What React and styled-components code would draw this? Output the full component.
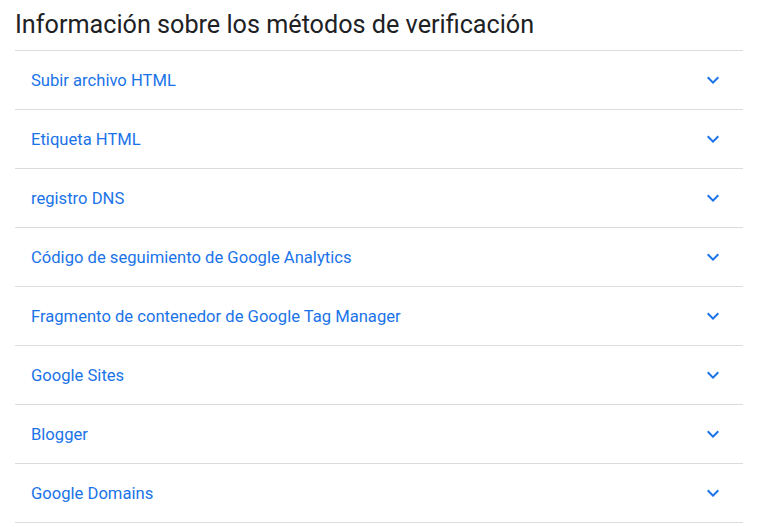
import React from 'react'
import styled, { createGlobalStyle } from 'styled-components'

const GlobalStyle = createGlobalStyle`
  body {
    margin: 0;
    background: #fff;
    font-family: Roboto, 'Noto Sans', Arial, sans-serif;
  }
`

const methods = [
  'Subir archivo HTML',
  'Etiqueta HTML',
  'registro DNS',
  'Código de seguimiento de Google Analytics',
  'Fragmento de contenedor de Google Tag Manager',
  'Google Sites',
  'Blogger',
  'Google Domains',
]

const ExpandIcon = () => (
  <svg width='24' height='24' viewBox='0 0 24 24' fill='#1a73e8'>
    <path d='M16.59 8.59L12 13.17 7.41 8.59 6 10l6 6 6-6z' />
  </svg>
)

const App = () => {
  return (
    <Wrapper>
      <GlobalStyle />
      <Title>Información sobre los métodos de verificación</Title>
      <List>
        {methods.map((name) => (
          <Row key={name}>
            <Label>{name}</Label>
            <ExpandIcon />
          </Row>
        ))}
      </List>
    </Wrapper>
  )
}

const Wrapper = styled.div`
  width: 728px;
  padding-left: 15px;
`

const Title = styled.h2`
  margin: 0;
  height: 50px;
  padding-top: 9px;
  box-sizing: border-box;
  font-size: 25.2px;
  line-height: 32px;
  font-weight: 400;
  color: #202124;
`

const List = styled.div`
  border-top: 1px solid #dadce0;
`

const Row = styled.div`
  display: flex;
  align-items: center;
  justify-content: space-between;
  height: 58px;
  padding: 0 18px 0 16px;
  border-bottom: 1px solid #dadce0;
  cursor: pointer;
`

const Label = styled.span`
  font-size: 16.6px;
  color: #1a73e8;
`

export default App
